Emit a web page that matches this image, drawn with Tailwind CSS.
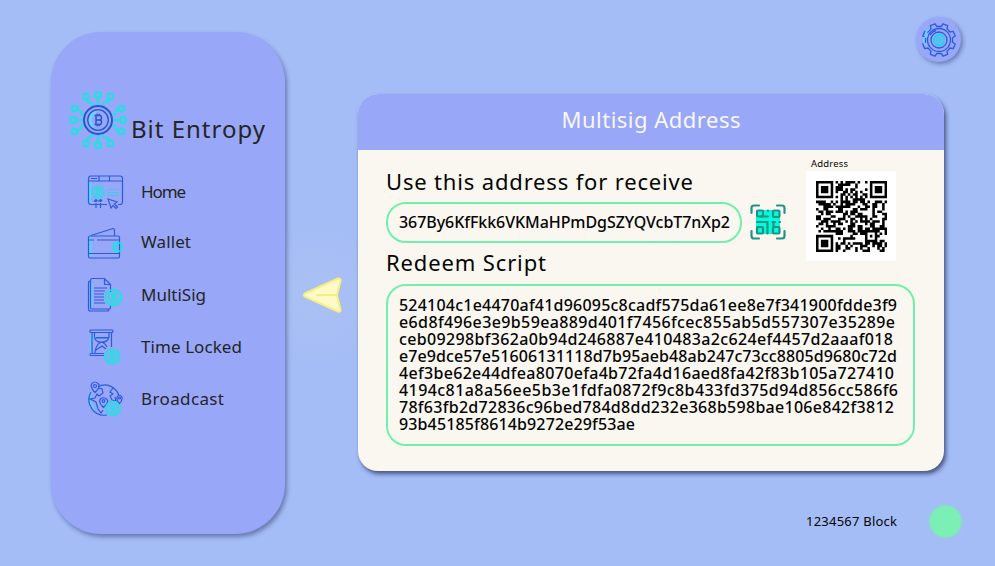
<!DOCTYPE html>
<html lang="en">
<head>
<meta charset="utf-8">
<title>Bit Entropy</title>
<script src="https://cdn.jsdelivr.net/npm/@tailwindcss/browser@4"></script>
</head>
<body class="w-[995px] h-[566px] overflow-hidden bg-[#a4bdf6] font-['Noto_Sans','Open_Sans',sans-serif] text-[#050505]">
<svg class="hidden">
  <defs>
    <g id="coin" fill="none" stroke="#0cecdc">
      <circle r="8" stroke-width="1.5"/><circle r="5.5" stroke-width="1.1"/>
      <path stroke-width="1.4" d="M-1.6-3V3M-2.5-3H.8a1.5 1.5 0 0 1 0 3H-1.6M.8 0a1.5 1.5 0 0 1 0 3H-2.5M-.6-4V-3M.9-4V-3M-.6 3V4M.9 3V4"/>
    </g>
  </defs>
</svg>
<div class="flex h-full">
  <aside class="ml-[51px] mr-px mt-8 w-[234px] h-[502px] shrink-0 rounded-[50px] bg-[#98a7f8] shadow-[2px_3px_4px_rgba(50,60,110,0.5)] text-[#252525]">
    <div class="flex pt-[58px] pl-[17px]">
      <svg width="60" height="60" viewBox="-30 -30 60 60" fill="none" class="shrink-0">
        <g stroke="#0eeadf" stroke-width="1.8">
          <path d="M0-15V-22M15 0H22M0 15V22M-15 0H-22"/>
          <circle cy="-25" r="3"/><circle cx="25" r="3"/><circle cy="25" r="3"/><circle cx="-25" r="3"/>
          <path d="M5-14 6-17 10-18 11-21M-5-14-6-17-10-18-11-21M5 14 6 17 10 18 11 21M-5 14-6 17-10 18-11 21M14-5 17-6 18-10 21-11M14 5 17 6 18 10 21 11M-14-5-17-6-18-10-21-11M-14 5-17 6-18 10-21 11"/>
          <circle cx="12" cy="-23.5" r="2.9"/><circle cx="-12" cy="-23.5" r="2.9"/><circle cx="12" cy="23.5" r="2.9"/><circle cx="-12" cy="23.5" r="2.9"/>
          <circle cx="23.5" cy="-11.5" r="2.9"/><circle cx="23.5" cy="11.5" r="2.9"/><circle cx="-23.5" cy="-11.5" r="2.9"/><circle cx="-23.5" cy="11.5" r="2.9"/>
        </g>
        <circle r="14" stroke="#2455d4" stroke-width="2"/>
        <circle r="10.3" stroke="#2455d4" stroke-width="1.3"/>
        <path d="M-2-8A8.5 8.5 0 0 0-4 7" stroke="#62dcf7" stroke-width="2.2"/>
        <path d="M-2-4.5V4.5M-3.5-4.5H1.3a2.2 2.2 0 0 1 0 4.4H-2M1.3 0a2.2 2.2 0 0 1 0 4.5H-3.5M-.8-6.3V-4.5M1.4-6.3V-4.5M-.8 4.5V6.3M1.4 4.5V6.3" stroke="#2455d4" stroke-width="1.5"/>
      </svg>
      <h1 class="ml-[3px] mt-[23px] text-[24px] leading-8 whitespace-nowrap"><span data-w="134">Bit Entropy</span></h1>
    </div>
    <nav class="mt-[16px] pl-[35px] text-[17px]">
      <a class="flex h-[52px] items-center gap-[17px]">
        <svg width="38" height="38" viewBox="0 0 38 38" fill="none" stroke="#2b5be0" stroke-width="1.2">
          <path d="M4 8V31" stroke="#59d6fa" stroke-width="2.2"/>
          <path d="M21 31.5H5a2.5 2.5 0 0 1-2.5-2.5V5.5A2.5 2.5 0 0 1 5 3H34a2.5 2.5 0 0 1 2.5 2.5V29a2.5 2.5 0 0 1-2.5 2.5H32M2.5 8H36.5M13 3V8M23.5 3V8M5 5.5H11"/>
          <g transform="translate(12 19) scale(.78)"><use href="#coin"/></g>
          <path d="M21 16.5H33M21 19.5H33M21 22.5H33" stroke="#3fc9f2"/>
          <path d="M10 35V27M14.500 35V27M8 28.500 10 26.500 12 28.500M12.500 28.500 14.500 26.500 16.500 28.500" stroke-dasharray="5 1"/>
          <path d="M22 26 31 29 28.500 31 31.500 34 30 35.500 27 32.500 25 35Z"/>
        </svg><span class="-mt-px" data-w="45">Home</span>
      </a>
      <a class="flex h-[51px] items-center gap-[17px]">
        <svg width="38" height="38" viewBox="0 0 38 38" fill="none" stroke="#2b5be0" stroke-width="1.200" class="-mt-[2px]">
          <path d="M4.500 14V32" stroke="#59d6fa" stroke-width="2.200"/>
          <rect x="2.500" y="12" width="31" height="22" rx="1.500"/><path d="M5 11.500 27 4.500Q28.500 4.500 28.500 6V12M2.500 29.500H33.500M11 16H33M3 16H8"/>
          <rect x="27.500" y="19" width="8" height="8" rx="1.500" stroke="#0cecdc" stroke-width="1.500"/><circle cx="30.500" cy="23" r="1.300" stroke="#0cecdc"/>
        </svg><span class="-mt-[3px]" data-w="50">Wallet</span>
      </a>
      <a class="flex h-[52px] items-center gap-[17px]">
        <svg width="38" height="38" viewBox="0 0 38 38" fill="none" stroke="#2b5be0" stroke-width="1.200">
          <path d="M5.500 7V32" stroke="#59d6fa" stroke-width="2.200"/>
          <path d="M24.500 29V31.500Q24.500 33 23 33H6Q4.500 33 4.500 31.500V4Q4.500 2.500 6 2.500H18.500L24.500 8.500V16M18.500 2.500V8.500H24.500M4.500 5Q2.500 5 2.500 7V33Q2.500 35 4.500 35H21Q23 35 23 33M8 12H21M8 15H19M8 18H18M8 21H18M8 24H18M8 27H19"/>
          <g transform="translate(27.500 21.500)"><use href="#coin"/></g>
        </svg><span data-w="65">MultiSig</span>
      </a>
      <a class="flex h-[52px] items-center gap-[17px]">
        <svg width="38" height="38" viewBox="0 0 38 38" fill="none" stroke="#2b5be0" stroke-width="1.200">
          <path d="M5 5V27M9 7 10 11" stroke="#59d6fa" stroke-width="1.800"/>
          <rect x="4" y="2" width="23" height="2.500" rx="1"/><path d="M18 27.500H5Q4 27.500 4 26.500T5 25.500H18M6 4.500V25.500M25.500 4.500V19M8.500 4.500V9Q9 13 14 14.700 10 16.500 8.800 25.500M23 4.500V9Q22.500 13 17 14.700 19.500 16 21 19M9 10H23M10 9.500H22M10 12.500Q16 16 22 12M10 22 16 18 20 21"/>
          <g transform="translate(26.500 28.500) scale(.92)"><use href="#coin"/></g>
        </svg><span class="-mt-px" data-w="101">Time Locked</span>
      </a>
      <a class="flex h-[52px] items-center gap-[17px]">
        <svg width="38" height="38" viewBox="0 0 38 38" fill="none" stroke="#2b5be0" stroke-width="1.200">
          <path d="M5.500 12Q1 23 9 31" stroke="#59d6fa" stroke-width="2"/>
          <path d="M12 6.500A15 15 0 0 1 33 16M5 12A15.500 15.500 0 0 0 21 35M33 23V24"/>
          <path d="M9 12.500Q3.500 6.500 6 3.500T12 3.500 9 12.500ZM17.500 27.500Q12 21.500 14.500 19T20.500 19 17.500 27.500ZM33.500 23.500Q29.500 19 31.500 16.500T35.500 16.500 33.500 23.500Z"/>
          <circle cx="9" cy="6" r="1.500"/><circle cx="17.500" cy="21" r="1.300"/><circle cx="33.500" cy="18" r="1"/>
          <path d="M12 8 16 9 17 13 13 16 11 14 9 18 4 19 10 22 12 29 15 33 17 30M27 8 24 12 27 14 24 16 26 20 30 21 29 17"/>
          <g transform="translate(27 28.500) scale(.9)"><use href="#coin"/></g>
        </svg><span class="-mt-px" data-w="83">Broadcast</span>
      </a>
    </nav>
  </aside>

  <div class="w-[72px] shrink-0 pt-[275px] pl-4 bg-[radial-gradient(circle_at_30px_295px,rgba(255,255,190,0.06),transparent_75px)]">
    <svg width="42" height="40" viewBox="0 0 42 40"><path d="M36 3.500 3 18.500Q.5 20 3 21.700L36 36.500Q39 37.500 38.500 34.500L35 20.300 38.500 6Q39 3 36 3.500Z" fill="#fffbc8" stroke="#faee7d" stroke-width="2"/><path d="M14 20H35" stroke="#f8ec74" stroke-width="1.800"/></svg>
  </div>

  <div class="flex flex-col w-[637px]">
    <div class="flex justify-end h-[94px] pt-[17px] pr-[34px]">
      <button class="w-[45px] h-[45px] rounded-full bg-[#98a7f8] shadow-[2px_2px_4px_rgba(50,60,110,0.5)] flex items-center justify-center">
        <svg width="38" height="38" viewBox="-19 -19 38 38" fill="none" stroke="#2b5be0" stroke-width="1.300">
          <path id="gear" d=""/>
          <circle r="11.500"/><circle r="8"/><path d="M-9-5A10 10 0 0 1-3-9.500"/>
          <circle r="5" stroke="#0cdfe6" stroke-width="1.800"/><circle r="1.700" stroke="#0cdfe6" stroke-width="1.500"/>
          <path d="M-10-11-13-8-12-4-15-2V3L-12 5" stroke="#5fdcfa" stroke-width="1.500"/>
        </svg>
      </button>
    </div>
    <main class="w-[586px] h-[377px] rounded-[20px] bg-[#faf7f0] shadow-[2px_3px_4px_rgba(30,40,80,0.7)] overflow-hidden">
      <header class="h-14 bg-[#98a7f8] flex justify-center pt-[9px] text-[#faf7f0] text-[22px] leading-8"><span data-w="179">Multisig Address</span></header>
      <div class="flex pl-7">
        <section class="w-[420px] pt-[15px]">
          <h2 class="text-[22px] leading-8"><span data-w="307">Use this address for receive</span></h2>
          <div class="flex items-center mt-[5px]">
            <div class="w-[356px] h-[41px] rounded-[20px] border-2 border-[#72efad] pl-[11px] pb-[2px] flex items-center text-[16px] font-medium"><span data-w="331">367By6KfFkk6VKMaHPmDgSZYQVcbT7nXp2</span></div>
            <svg class="ml-2 -mt-[2px]" width="36" height="36" viewBox="0 0 36 36" fill="none" stroke="#209483" stroke-width="2.200" stroke-linecap="round">
              <path d="M6 6H30V30H6Z" fill="#00fcdc" stroke="none"/>
              <path d="M1.500 9V4Q1.500 1.500 4 1.500H9M27 1.500H32Q34.500 1.500 34.500 4V9M34.500 27V32Q34.500 34.500 32 34.500H27M9 34.500H4Q1.500 34.500 1.500 32V27"/>
              <rect x="7" y="6.500" width="6" height="6" rx="1"/><rect x="23" y="6.500" width="6.500" height="6.500" rx="1"/><rect x="7" y="23" width="6" height="6.500" rx="1"/><rect x="23" y="23" width="6.500" height="6.500" rx="1"/>
              <path d="M18 6.500V7M11 12.500H18M7 18H17.500V29.500M22.500 18H25M29.500 18H30M23.500 18V22"/>
            </svg>
          </div>
          <h2 class="mt-[3px] mb-px text-[22px] leading-8"><span data-w="160">Redeem Script</span></h2>
        </section>
        <figure class="pt-2">
          <figcaption class="text-[9.500px] leading-3 pl-[5px] h-[13px]"><span data-w="37">Address</span></figcaption>
          <div class="w-[90px] h-[90px] bg-white p-[10px]"><svg id="qr" width="71" height="71" viewBox="0 0 29 29"><path/></svg></div>
        </figure>
      </div>
      <div class="ml-7 mt-[5px] w-[529px] h-[162px] rounded-[20px] border-2 border-[#72efad] pl-[11px] pt-[11px] text-[16px] leading-[17px] font-medium">
        <div><span data-w="498">524104c1e4470af41d96095c8cadf575da61ee8e7f341900fdde3f9</span></div>
        <div><span data-w="496">e6d8f496e3e9b59ea889d401f7456fcec855ab5d557307e35289e</span></div>
        <div><span data-w="494">ceb09298bf362a0b94d246887e410483a2c624ef4457d2aaaf018</span></div>
        <div><span data-w="498">e7e9dce57e51606131118d7b95aeb48ab247c73cc8805d9680c72d</span></div>
        <div><span data-w="495">4ef3be62e44dfea8070efa4b72fa4d16aed8fa42f83b105a727410</span></div>
        <div><span data-w="499">4194c81a8a56ee5b3e1fdfa0872f9c8b433fd375d94d856cc586f6</span></div>
        <div><span data-w="495">78f63fb2d72836c96bed784d8dd232e368b598bae106e842f3812</span></div>
        <div><span data-w="236">93b45185f8614b9272e29f53ae</span></div>
      </div>
    </main>
    <footer class="flex items-center justify-end mt-[35px] pr-[34px] gap-[33px] text-[13px]">
      <span data-w="91">1234567 Block</span>
      <i class="block w-[31px] h-[31px] rounded-full bg-[#7cefb4] shadow-[0_0_4px_#7cefb4]"></i>
    </footer>
  </div>
</div>
<script>
// Tracks each label to its intended width
function track() {
  document.querySelectorAll('[data-w]').forEach(function (el) {
    el.style.whiteSpace = 'nowrap';
    el.style.letterSpacing = '0px';
    el.style.marginRight = '0px';
    var gap = (+el.dataset.w - el.getBoundingClientRect().width) / (el.textContent.length - 1);
    el.style.letterSpacing = gap.toFixed(3) + 'px';
    el.style.marginRight = (-gap).toFixed(3) + 'px';
  });
}
track();
window.addEventListener('load', function () { track(); requestAnimationFrame(track); });

// Gear outline
(function () {
  var p = [];
  for (var i = 0; i < 8; i++) [[-.23, 13.7], [-.15, 16.7], [.15, 16.7], [.23, 13.7]].forEach(function (q) {
    var a = i * Math.PI / 4 + q[0] + Math.PI / 8;
    p.push((q[1] * Math.cos(a)).toFixed(2) + ' ' + (q[1] * Math.sin(a)).toFixed(2));
  });
  document.getElementById('gear').setAttribute('d', 'M' + p.join('L') + 'Z');
})();

// QR encoder, version 3, level L, byte mode
function qrPath(text, mask) {
  var N = 29, ecn = 15, dn = 55, bits = [];
  function put(v, n) { while (n--) bits.push(v >> n & 1); }
  put(4, 4); put(text.length, 8);
  for (var i = 0; i < text.length; i++) put(text.charCodeAt(i), 8);
  put(0, 4);
  var data = [];
  for (i = 0; i < bits.length; i += 8) data.push(parseInt(bits.slice(i, i + 8).join(''), 2));
  for (i = 0; data.length < dn; i++) data.push(i % 2 ? 17 : 236);
  function mul(a, b) { var z = 0; for (var k = 7; k >= 0; k--) { z = z << 1 ^ (z >> 7) * 285; z ^= (b >> k & 1) * a; } return z; }
  var gen = Array(ecn).fill(0), root = 1; gen[ecn - 1] = 1;
  for (i = 0; i < ecn; i++) {
    for (var j = 0; j < ecn; j++) { gen[j] = mul(gen[j], root); if (j + 1 < ecn) gen[j] ^= gen[j + 1]; }
    root = mul(root, 2);
  }
  var rem = Array(ecn).fill(0);
  data.forEach(function (b) { var f = b ^ rem.shift(); rem.push(0); gen.forEach(function (g, k) { rem[k] ^= mul(g, f); }); });
  var words = data.concat(rem), m = [], fix = [];
  for (i = 0; i < N; i++) { m.push(Array(N).fill(0)); fix.push(Array(N).fill(0)); }
  function set(x, y, v) { if (x >= 0 && y >= 0 && x < N && y < N) { m[y][x] = v ? 1 : 0; fix[y][x] = 1; } }
  for (i = 0; i < N; i++) { set(6, i, i % 2 === 0); set(i, 6, i % 2 === 0); }
  [[3, 3], [N - 4, 3], [3, N - 4]].forEach(function (c) {
    for (var dy = -4; dy < 5; dy++) for (var dx = -4; dx < 5; dx++) { var d = Math.max(Math.abs(dx), Math.abs(dy)); set(c[0] + dx, c[1] + dy, d !== 2 && d !== 4); }
  });
  for (var dy = -2; dy < 3; dy++) for (var dx = -2; dx < 3; dx++) set(22 + dx, 22 + dy, Math.max(Math.abs(dx), Math.abs(dy)) !== 1);
  var f = 8 | mask, r = f;
  for (i = 0; i < 10; i++) r = r << 1 ^ (r >> 9) * 1335;
  var fb = (f << 10 | r) ^ 21522;
  function g(k) { return fb >> k & 1; }
  for (i = 0; i < 6; i++) set(8, i, g(i));
  set(8, 7, g(6)); set(8, 8, g(7)); set(7, 8, g(8));
  for (i = 9; i < 15; i++) set(14 - i, 8, g(i));
  for (i = 0; i < 8; i++) set(N - 1 - i, 8, g(i));
  for (i = 8; i < 15; i++) set(8, N - 15 + i, g(i));
  set(8, N - 8, 1);
  var k = 0;
  for (var right = N - 1; right > 0; right -= 2) {
    if (right === 6) right = 5;
    for (var v = 0; v < N; v++) for (j = 0; j < 2; j++) {
      var x = right - j, y = (right + 1 & 2) === 0 ? N - 1 - v : v;
      if (!fix[y][x]) { m[y][x] = k < 560 ? words[k >> 3] >> (7 - (k & 7)) & 1 : 0; k++; }
    }
  }
  var rule = [(x, y) => (x + y) % 2, (x, y) => y % 2, (x, y) => x % 3, (x, y) => (x + y) % 3][mask];
  var out = '';
  for (y = 0; y < N; y++) for (x = 0; x < N; x++) if (m[y][x] ^ (!fix[y][x] && rule(x, y) === 0 ? 1 : 0)) out += 'M' + x + ' ' + y + 'h1.04v1.04h-1.04z';
  return out;
}
document.querySelector('#qr path').setAttribute('d', qrPath('367By6KfFkk6VKMaHPmDgSZYQVcbT7nXp2', 3));
</script>
</body>
</html>
